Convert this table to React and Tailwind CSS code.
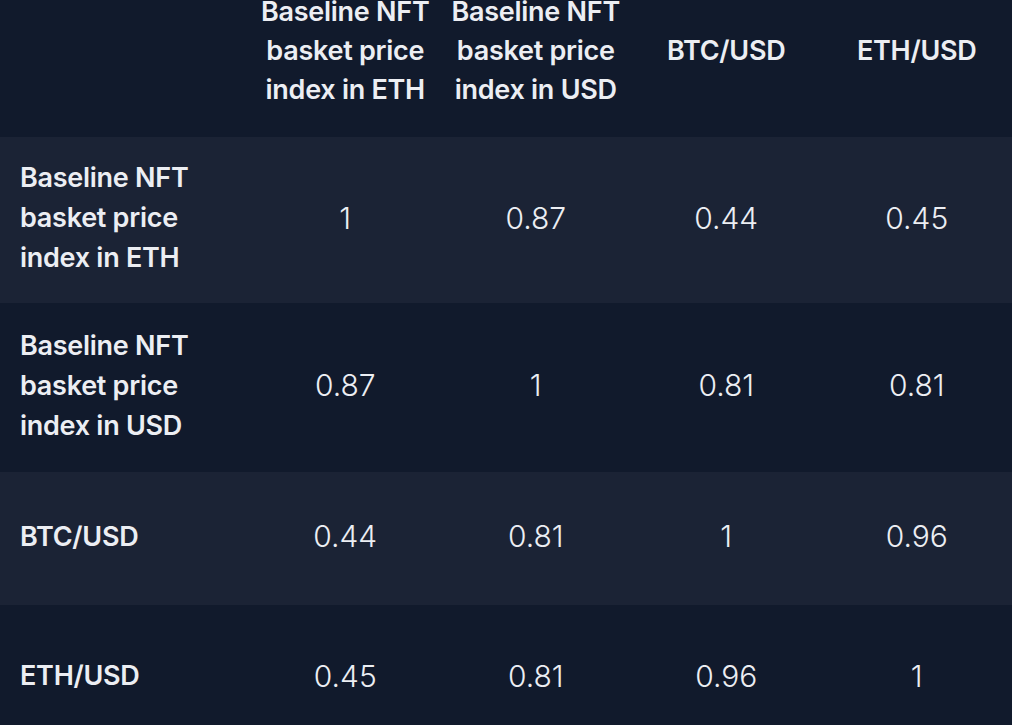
const COLS = [
  'Baseline NFT basket price index in ETH',
  'Baseline NFT basket price index in USD',
  'BTC/USD',
  'ETH/USD',
];

const ROWS = [
  { label: 'Baseline NFT basket price index in ETH', values: ['1', '0.87', '0.44', '0.45'], h: 'h-[166px]', bg: 'bg-[#1b2335]' },
  { label: 'Baseline NFT basket price index in USD', values: ['0.87', '1', '0.81', '0.81'], h: 'h-[169px]', bg: 'bg-[#111a2c]' },
  { label: 'BTC/USD', values: ['0.44', '0.81', '1', '0.96'], h: 'h-[133px]', bg: 'bg-[#1b2335]' },
  { label: 'ETH/USD', values: ['0.45', '0.81', '0.96', '1'], h: 'h-[146px]', bg: 'bg-[#111a2c]' },
];

export default function App() {
  return (
    <div className="w-[1012px] h-[725px] overflow-hidden bg-[#111a2c] font-['Inter',sans-serif] text-[#eceef3]">
      <table className="w-full table-fixed border-collapse -mt-[36px]">
        <colgroup>
          <col className="w-[250px]" />
          <col />
          <col />
          <col />
          <col />
        </colgroup>
        <thead>
          <tr className="h-[173px] bg-[#111a2c]">
            <th />
            {COLS.map((c) => (
              <th key={c} className="px-1 text-center align-middle text-[27px] leading-[39px] font-semibold tracking-[-0.01em]">
                {c}
              </th>
            ))}
          </tr>
        </thead>
        <tbody>
          {ROWS.map((r) => (
            <tr key={r.label} className={`${r.h} ${r.bg}`}>
              <td className="pl-5 pr-8 pb-1 text-left align-middle text-[27px] leading-[40px] font-semibold tracking-[-0.01em]">
                {r.label}
              </td>
              {r.values.map((v, i) => (
                <td key={i} className="pb-1 text-center align-middle text-[30px] font-light">
                  {v}
                </td>
              ))}
            </tr>
          ))}
        </tbody>
      </table>
    </div>
  );
}
